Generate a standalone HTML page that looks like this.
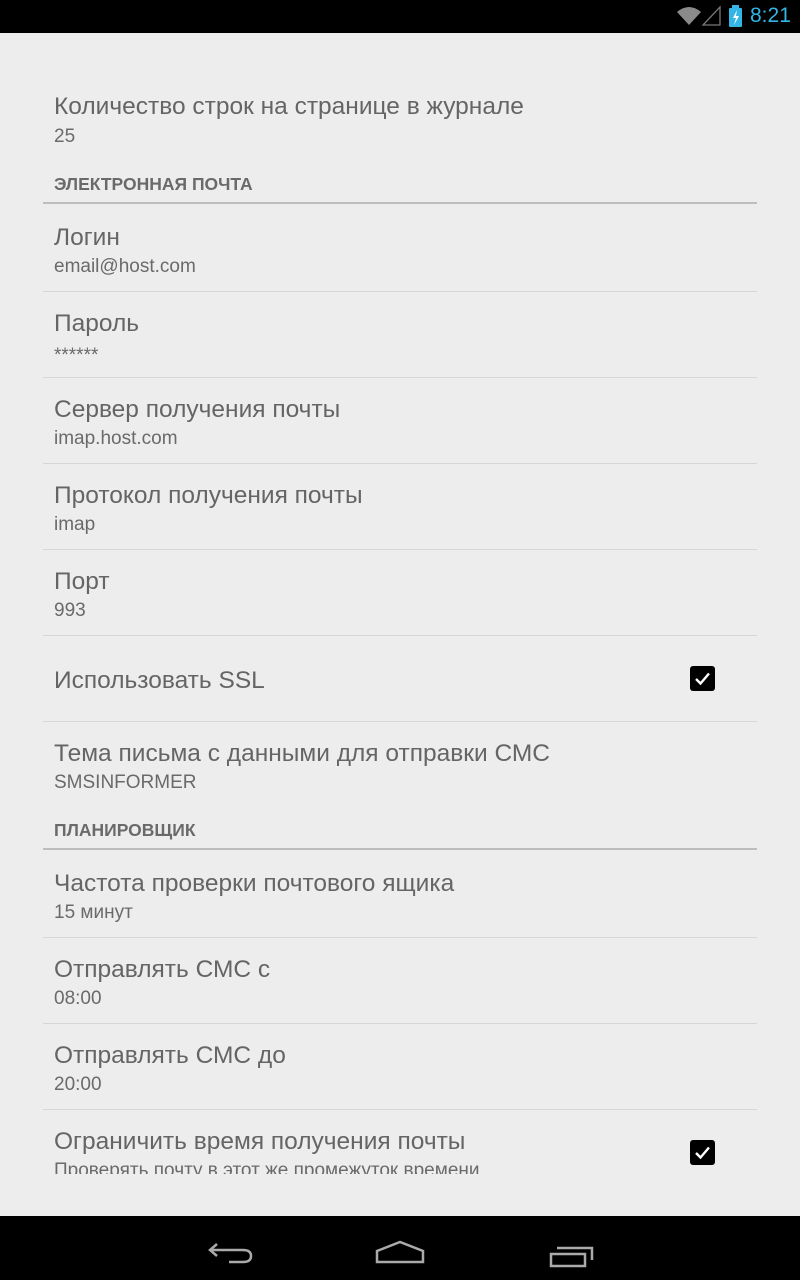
<!DOCTYPE html>
<html><head><meta charset="utf-8"><style>
*{margin:0;padding:0;box-sizing:border-box}
body{width:800px;height:1280px;background:#ededed;position:relative;overflow:hidden;font-family:"Liberation Sans",sans-serif;color:#666}
.sb{position:absolute;left:0;top:0;width:800px;height:33px;background:#000}
.nav{position:absolute;left:0;top:1216px;width:800px;height:64px;background:#000}
.t{position:absolute;left:54px;font-size:24.5px;line-height:28px;white-space:nowrap;color:#656565;margin-top:2px}
.s{position:absolute;left:54px;font-size:19px;line-height:22px;white-space:nowrap;color:#6a6a6a;margin-top:2px}
.h{position:absolute;left:54px;font-size:17.5px;font-weight:bold;line-height:20px;color:#6a6a6a}
.hl{position:absolute;left:43px;width:714px;height:2px;background:#bdbdbd}
.dl{position:absolute;left:43px;width:714px;height:1px;background:#d6d6d6}
.cb{position:absolute;left:690px;width:25px;height:25px;background:#000;border-radius:3px}
</style></head><body>
<div class="sb">
<svg style="position:absolute;left:676px;top:5px" width="50" height="22" viewBox="0 0 50 22">
<path d="M1 7 Q13 -3 25 7 L13 20 Z" fill="#8a8a8a"/>
<path d="M44 2 L44 20 L27 20 Z" fill="none" stroke="#777" stroke-width="1.3"/>
</svg>
<div style="position:absolute;left:729px;top:8px;width:13px;height:19px;background:#33b5e5;border-radius:1px"></div>
<div style="position:absolute;left:732px;top:5px;width:7px;height:3px;background:#33b5e5"></div>
<svg style="position:absolute;left:729px;top:8px" width="13" height="19"><path d="M8 2 L4 10 L7 10 L5 17 L10 8 L7 8 Z" fill="#fff"/></svg>
<div style="position:absolute;left:750px;top:4px;font-size:21px;color:#33b5e5">8:21</div>
</div>

<div class="t" style="top:91px">Количество строк на странице в журнале</div>
<div class="s" style="top:124px">25</div>
<div class="h" style="top:174px">ЭЛЕКТРОННАЯ ПОЧТА</div>
<div class="hl" style="top:202px"></div>

<div class="t" style="top:222px">Логин</div>
<div class="s" style="top:254px">email@host.com</div>
<div class="dl" style="top:291px"></div>
<div class="t" style="top:308px">Пароль</div>
<div class="s" style="top:343px">******</div>
<div class="dl" style="top:377px"></div>
<div class="t" style="top:394px">Сервер получения почты</div>
<div class="s" style="top:426px">imap.host.com</div>
<div class="dl" style="top:463px"></div>
<div class="t" style="top:480px">Протокол получения почты</div>
<div class="s" style="top:512px">imap</div>
<div class="dl" style="top:549px"></div>
<div class="t" style="top:566px">Порт</div>
<div class="s" style="top:598px">993</div>
<div class="dl" style="top:635px"></div>
<div class="t" style="top:665px">Использовать SSL</div>
<div class="cb" style="top:666px"><svg width="25" height="25"><path d="M6 13 L10.5 17.5 L19 7.5" fill="none" stroke="#fff" stroke-width="2.4"/></svg></div>
<div class="dl" style="top:721px"></div>
<div class="t" style="top:738px">Тема письма с данными для отправки СМС</div>
<div class="s" style="top:770px">SMSINFORMER</div>
<div class="h" style="top:820px">ПЛАНИРОВЩИК</div>
<div class="hl" style="top:848px"></div>
<div class="t" style="top:868px">Частота проверки почтового ящика</div>
<div class="s" style="top:900px">15 минут</div>
<div class="dl" style="top:937px"></div>
<div class="t" style="top:954px">Отправлять СМС с</div>
<div class="s" style="top:986px">08:00</div>
<div class="dl" style="top:1023px"></div>
<div class="t" style="top:1040px">Отправлять СМС до</div>
<div class="s" style="top:1072px">20:00</div>
<div class="dl" style="top:1109px"></div>
<div class="t" style="top:1126px">Ограничить время получения почты</div>
<div class="s" style="top:1158px;height:14px;overflow:hidden">Проверять почту в этот же промежуток времени</div>
<div class="cb" style="top:1140px"><svg width="25" height="25"><path d="M6 13 L10.5 17.5 L19 7.5" fill="none" stroke="#fff" stroke-width="2.4"/></svg></div>

<div class="nav">
<svg width="800" height="64" style="position:absolute;left:0;top:0">
<g fill="none" stroke="#aaa" stroke-width="2.5">
<path d="M210 34 L243 34 Q251 34 251 40 Q251 46 243 46 L229 46"/>
<path d="M217 28 L210 34 L217 40"/>
<path d="M377 46 L377 35 L400 26 L423 35 L423 46 Z"/>
<path d="M551 38 L585 38 L585 50 L551 50 Z"/>
<path d="M557 32 L592 32 L592 44"/>
</g></svg>
</div>
</body></html>
